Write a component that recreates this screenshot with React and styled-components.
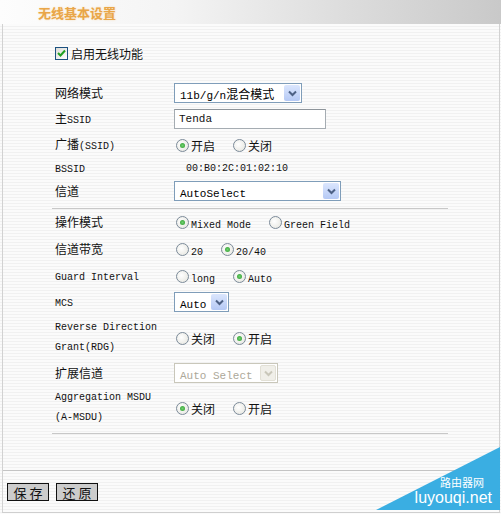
import styled, { createGlobalStyle } from "styled-components";

const GlobalStyle = createGlobalStyle`
  html, body { margin: 0; padding: 0; background: #fff; }
  body { font-family: "Noto Sans CJK SC", "Liberation Sans", sans-serif; font-size: 12px; color: #111; }
`

// split a label into CJK runs and latin runs, the latin ones get the narrow mono face
function mix(str) {
  return str.split(/([\u4e00-\u9fff]+)/).filter(Boolean).map((part, i) =>
    /[\u4e00-\u9fff]/.test(part) ? <span key={i}>{part}</span> : <Lat key={i}>{part}</Lat>
  )
}

function Chevron({ color = "#4d6185" }) {
  return (
    <svg width="9" height="7" viewBox="0 0 9 7">
      <path d="M1 1.5 L4.5 5 L8 1.5" fill="none" stroke={color} strokeWidth="2" />
    </svg>
  )
}

function Select({ width, value, disabled }) {
  return (
    <SelectBox $w={width} $disabled={disabled}>
      <span>{mix(value)}</span>
      <Arrow $disabled={disabled}>
        <Chevron color={disabled ? "#c9c7ba" : "#4d6185"} />
      </Arrow>
    </SelectBox>
  )
}

function Radios({ options, checked }) {
  return (
    <RadioGroup>
      {options.map((o, i) => (
        <RadioItem key={o}>
          <RadioDot $on={i === checked} />
          <span>{mix(o)}</span>
        </RadioItem>
      ))}
    </RadioGroup>
  )
}

function App() {
  return (
    <Page>
      <GlobalStyle />
      <Header>
        <Title>无线基本设置</Title>
      </Header>
      <Frame>
        <EnableRow>
          <CheckBox>
            <svg width="9" height="8" viewBox="0 0 9 8">
              <path d="M1 4 L3.5 6.5 L8 1.5" fill="none" stroke="#21a121" strokeWidth="2" />
            </svg>
          </CheckBox>
          <span>启用无线功能</span>
        </EnableRow>

        <Form>
          <Row $h={24}>
            <Label>网络模式</Label>
            <Control><Select width={128} value="11b/g/n混合模式" /></Control>
          </Row>
          <Row $h={28}>
            <Label>主<Lat>SSID</Lat></Label>
            <Control><TextInput><Lat>Tenda</Lat></TextInput></Control>
          </Row>
          <Row $h={24}>
            <Label>广播<Lat>(SSID)</Lat></Label>
            <Control><Radios options={["开启", "关闭"]} checked={0} /></Control>
          </Row>
          <Row $h={22}>
            <Label><Lat>BSSID</Lat></Label>
            <Control><Mac>00:B0:2C:01:02:10</Mac></Control>
          </Row>
          <Row $h={24}>
            <Label>信道</Label>
            <Control><Select width={167} value="AutoSelect" /></Control>
          </Row>
          <Divider $top={5} />
          <Row $h={26}>
            <Label>操作模式</Label>
            <Control><Radios options={["Mixed Mode", "Green Field"]} checked={0} /></Control>
          </Row>
          <Row $h={28}>
            <Label>信道带宽</Label>
            <Control><Radios options={["20", "20/40"]} checked={1} /></Control>
          </Row>
          <Row $h={26}>
            <Label><Lat>Guard Interval</Lat></Label>
            <Control><Radios options={["long", "Auto"]} checked={1} /></Control>
          </Row>
          <Row $h={26}>
            <Label><Lat>MCS</Lat></Label>
            <Control><Select width={55} value="Auto" /></Control>
          </Row>
          <Row $h={46}>
            <Label>
              <Line>Reverse Direction</Line>
              <Line>Grant(RDG)</Line>
            </Label>
            <Control><Radios options={["关闭", "开启"]} checked={1} /></Control>
          </Row>
          <Row $h={24}>
            <Label>扩展信道</Label>
            <Control><Select width={104} value="Auto Select" disabled /></Control>
          </Row>
          <Row $h={46}>
            <Label>
              <Line>Aggregation MSDU</Line>
              <Line>(A-MSDU)</Line>
            </Label>
            <Control><Radios options={["关闭", "开启"]} checked={0} /></Control>
          </Row>
          <Divider $top={2} />
        </Form>

        <Footer>
          <Button>保 存</Button>
          <Button>还 原</Button>
        </Footer>
      </Frame>

      <Badge>
        <BadgeText>
          <BadgeName>路由器网</BadgeName>
          <BadgeUrl>luyouqi.net</BadgeUrl>
        </BadgeText>
      </Badge>
    </Page>
  )
}

const Lat = styled.span`
  font-family: "Liberation Mono", "DejaVu Sans Mono", monospace;
  font-size: 10px;
  letter-spacing: 0;
`

const Line = styled.div`
  font-family: "Liberation Mono", "DejaVu Sans Mono", monospace;
  font-size: 10px;
  line-height: 20px;
  height: 20px;
  white-space: nowrap;
`

const Page = styled.div`
  position: relative;
  width: 501px;
  height: 514px;
  overflow: hidden;
  background: repeating-linear-gradient(to bottom, #fbfbfb 0 2px, #f1f1f1 2px 3px);
`

const Header = styled.div`
  height: 24px;
  display: flex;
  align-items: center;
  padding-left: 38px;
  background: linear-gradient(to right, #fdfdfd 0%, #f4f4f4 35%, #dcdcdc 70%, #c9c9c9 100%);
`

const Title = styled.div`
  font-size: 13px;
  font-weight: bold;
  color: #e9a648;
  letter-spacing: 0;
  text-shadow: 0 0 2px #f7d9ae;
`

const Frame = styled.div`
  margin-left: 2px;
  width: 496px;
  height: 488px;
  border-left: 1px solid #d2d2d2;
  border-right: 1px solid #d2d2d2;
  border-bottom: 1px solid #cfcfcf;
  display: flex;
  flex-direction: column;
`

const EnableRow = styled.div`
  margin-top: 20px;
  margin-left: 52px;
  height: 18px;
  display: flex;
  align-items: center;
  gap: 3px;
  font-size: 12px;
`

const CheckBox = styled.span`
  width: 11px;
  height: 11px;
  border: 1px solid #1c5180;
  background: linear-gradient(135deg, #dcdcd7, #fff);
  display: flex;
  align-items: center;
  justify-content: center;
`

const Form = styled.div`
  margin-top: 19px;
  margin-left: 49px;
  width: 396px;
  display: flex;
  flex-direction: column;
`

const Row = styled.div`
  height: ${p => p.$h}px;
  display: flex;
  align-items: center;
`

const Label = styled.div`
  width: 119px;
  padding-left: 3px;
  line-height: 20px;
  font-size: 12px;
`

const Control = styled.div`
  flex: 1;
  display: flex;
  align-items: center;
`

const SelectBox = styled.div`
  width: ${p => p.$w}px;
  height: 20px;
  box-sizing: border-box;
  border: 1px solid ${p => p.$disabled ? "#c9c7ba" : "#7f9db9"};
  background: #fff;
  color: ${p => p.$disabled ? "#aca899" : "#000"};
  display: flex;
  align-items: center;
  justify-content: space-between;
  padding-left: 5px;
  font-size: 12px;
  ${Lat} { font-size: 11px; }
`

const Arrow = styled.span`
  width: 16px;
  height: 16px;
  margin-right: 1px;
  border-radius: 2px;
  display: flex;
  align-items: center;
  justify-content: center;
  background: ${p => p.$disabled ? "#f0efe9" : "linear-gradient(#dbe6fd, #b5c9f5)"};
  border: ${p => p.$disabled ? "1px solid #e2e0d6" : "none"};
  box-sizing: border-box;
`

const TextInput = styled.div`
  width: 152px;
  height: 20px;
  box-sizing: border-box;
  border: 1px solid #a5acb2;
  border-top-color: #8d949a;
  background: #fff;
  display: flex;
  align-items: center;
  padding-left: 4px;
  ${Lat} { font-size: 11px; }
`

const Mac = styled(Lat)`
  margin-left: 12px;
`

const RadioGroup = styled.div`
  display: flex;
  align-items: center;
  padding-left: 2px;
  gap: 18px;
`

const RadioItem = styled.span`
  display: flex;
  align-items: center;
  gap: 2px;
  font-size: 12px;
`

const RadioDot = styled.span`
  width: 11px;
  height: 11px;
  border-radius: 50%;
  border: 1px solid #7b8a99;
  background: radial-gradient(circle at 40% 40%, #fff, #e3e3dc);
  position: relative;
  &::after {
    content: "";
    display: ${p => p.$on ? "block" : "none"};
    position: absolute;
    left: 3px;
    top: 3px;
    width: 5px;
    height: 5px;
    border-radius: 50%;
    background: radial-gradient(circle, #6fd06f, #2d9a2d);
  }
`

const Divider = styled.div`
  margin-top: ${p => p.$top}px;
  height: 1px;
  background: #c8c8c8;
`

const Footer = styled.div`
  margin-top: 36px;
  border-top: 1px solid #c4c4c4;
  padding: 12px 0 0 4px;
  display: flex;
  gap: 7px;
`

const Button = styled.div`
  width: 42px;
  height: 18px;
  box-sizing: border-box;
  border: 1px solid #111;
  background: #cccccc;
  display: flex;
  align-items: center;
  justify-content: center;
  font-size: 13px;
  line-height: 1;
`

const Badge = styled.div`
  position: absolute;
  right: 1px;
  bottom: 4px;
  width: 124px;
  height: 63px;
  background: #3aaee2;
  clip-path: polygon(100% 0, 100% 100%, 0 100%);
`

const BadgeText = styled.div`
  position: absolute;
  right: 8px;
  bottom: 4px;
  display: flex;
  flex-direction: column;
  align-items: flex-end;
  color: #fff;
`

const BadgeName = styled.span`
  font-size: 11px;
  line-height: 15px;
  margin-right: 8px;
`

const BadgeUrl = styled.span`
  font-family: "Liberation Sans", Arial, sans-serif;
  font-size: 16px;
  line-height: 16px;
`

export default App
